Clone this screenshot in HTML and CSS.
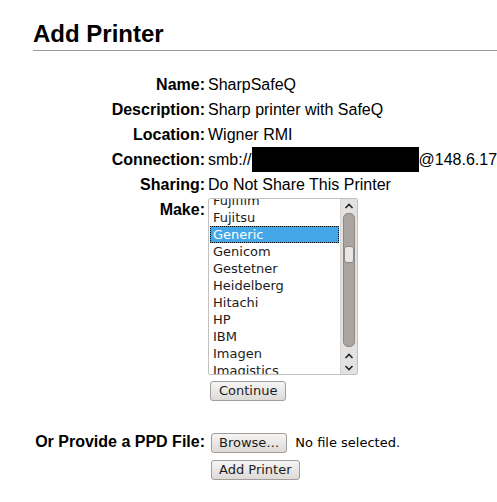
FILE: index.html
```html
<!DOCTYPE html>
<html lang="en">
<head>
    <meta charset="UTF-8">
    <title>Add Printer</title>
    <link rel="stylesheet" href="styles.css">
</head>
<body>

<div class="page">
    <h1>Add Printer</h1>

    <table class="form">
        <tr>
            <th>Name:</th>
            <td>SharpSafeQ</td>
        </tr>
        <tr>
            <th>Description:</th>
            <td>Sharp printer with SafeQ</td>
        </tr>
        <tr>
            <th>Location:</th>
            <td>Wigner RMI</td>
        </tr>
        <tr>
            <th>Connection:</th>
            <td class="nowrap">smb://<span class="redacted"></span>@148.6.176.21/SafeQ</td>
        </tr>
        <tr>
            <th>Sharing:</th>
            <td>Do Not Share This Printer</td>
        </tr>
        <tr>
            <th class="top">Make:</th>
            <td>
                <div class="listbox">
                    <div class="items">
                        <ul>
                            <li>Fujifilm</li>
                            <li>Fujitsu</li>
                            <li class="selected">Generic</li>
                            <li>Genicom</li>
                            <li>Gestetner</li>
                            <li>Heidelberg</li>
                            <li>Hitachi</li>
                            <li>HP</li>
                            <li>IBM</li>
                            <li>Imagen</li>
                            <li>Imagistics</li>
                            <li>Infoprint</li>
                        </ul>
                    </div>
                    <div class="scrollbar">
                        <svg class="arrow" width="16" height="14" viewBox="0 0 16 14"><path d="M4.5 9 L8 5.5 L11.5 9" fill="none" stroke="#222" stroke-width="1.6"/></svg>
                        <div class="track"><div class="thumb"></div></div>
                        <svg class="arrow" width="16" height="12" viewBox="0 0 16 12"><path d="M4.5 8 L8 4.5 L11.5 8" fill="none" stroke="#222" stroke-width="1.6"/></svg>
                        <svg class="arrow" width="16" height="12" viewBox="0 0 16 12"><path d="M4.5 4 L8 7.5 L11.5 4" fill="none" stroke="#222" stroke-width="1.6"/></svg>
                    </div>
                </div>
            </td>
        </tr>
        <tr>
            <th></th>
            <td class="continue"><button>Continue</button></td>
        </tr>
        <tr class="spacer"><th></th><td></td></tr>
        <tr>
            <th>Or Provide a PPD File:</th>
            <td class="nowrap"><button class="lower">Browse…</button><span class="nofile">No file selected.</span></td>
        </tr>
        <tr>
            <th></th>
            <td class="submit"><button class="lower">Add Printer</button></td>
        </tr>
    </table>
</div>

</body>
</html>
```

FILE: styles.css
```css
html, body {
    overflow-x: hidden;
}
body {
    margin: 0;
    padding: 0;
    background-color: white;
    color: black;
    font-family: "Liberation Sans", Arial, sans-serif;
    font-size: 16px;
}
.page {
    padding-left: 33px;
}
h1 {
    margin: 0;
    padding-top: 20px;
    padding-bottom: 2px;
    font-size: 24px;
    line-height: 28px;
    border-bottom: 1px solid #999;
}
.form {
    border-collapse: collapse;
    table-layout: fixed;
    width: 100%;
    margin-top: 21px;
}
.form th {
    width: 172px;
    padding: 0;
    text-align: right;
    font-weight: bold;
    line-height: 25px;
    height: 25px;
    white-space: nowrap;
    vertical-align: top;
}
.form td {
    padding: 0 0 0 3px;
    line-height: 25px;
    height: 25px;
    vertical-align: top;
}
.nowrap {
    white-space: nowrap;
}
.redacted {
    display: inline-block;
    width: 167px;
    height: 25px;
    background: black;
    vertical-align: top;
}
.listbox {
    display: flex;
    width: 148px;
    height: 175px;
    margin-top: 1px;
    border: 1px solid #c3c1bf;
    border-radius: 2px;
    background: white;
}
.items {
    flex: 1;
    overflow: hidden;
}
.items ul {
    list-style: none;
    margin: -7px 0 0 0;
    padding: 0;
    font-family: "DejaVu Sans", sans-serif;
    font-size: 13px;
}
.items li {
    height: 17px;
    line-height: 17px;
    margin: 0 1px;
    padding-left: 3px;
    color: #1c1c1c;
}
.items li.selected {
    background: #43a6e6;
    color: white;
    outline: 1px dotted black;
    outline-offset: -1px;
}
.scrollbar {
    width: 16px;
    display: flex;
    flex-direction: column;
    align-items: center;
    background: #e4e2e0;
    border-left: 1px solid #d6d4d2;
}
.arrow {
    display: block;
    flex: none;
}
.track {
    flex: 1;
    width: 10px;
    margin: 0 0 3px 0;
    background: #aaa4a0;
    border: 1px solid #8e8884;
    border-radius: 5px;
}
.thumb {
    margin-top: 32px;
    height: 15px;
    background: #e9e7e5;
    border: 1px solid #8e8884;
    border-radius: 3px;
}
.continue {
    padding-top: 2px !important;
}
.spacer td, .spacer th {
    height: 27px !important;
}
button {
    font-family: "DejaVu Sans", sans-serif;
    font-size: 13px;
    height: 20px;
    line-height: 16px;
    padding: 0 8px;
    margin: 0 0 0 2px;
    color: #1c1c1c;
    background: linear-gradient(#f6f5f4, #dddad7);
    border: 1px solid #a09d9a;
    border-radius: 3px;
    vertical-align: middle;
}
button.lower {
    margin-left: 3px;
    padding: 0 7px;
}
.nofile {
    margin-left: 8px;
    font-family: "DejaVu Sans", sans-serif;
    font-size: 13px;
    vertical-align: middle;
}
.submit {
    padding-top: 1px !important;
}
```
